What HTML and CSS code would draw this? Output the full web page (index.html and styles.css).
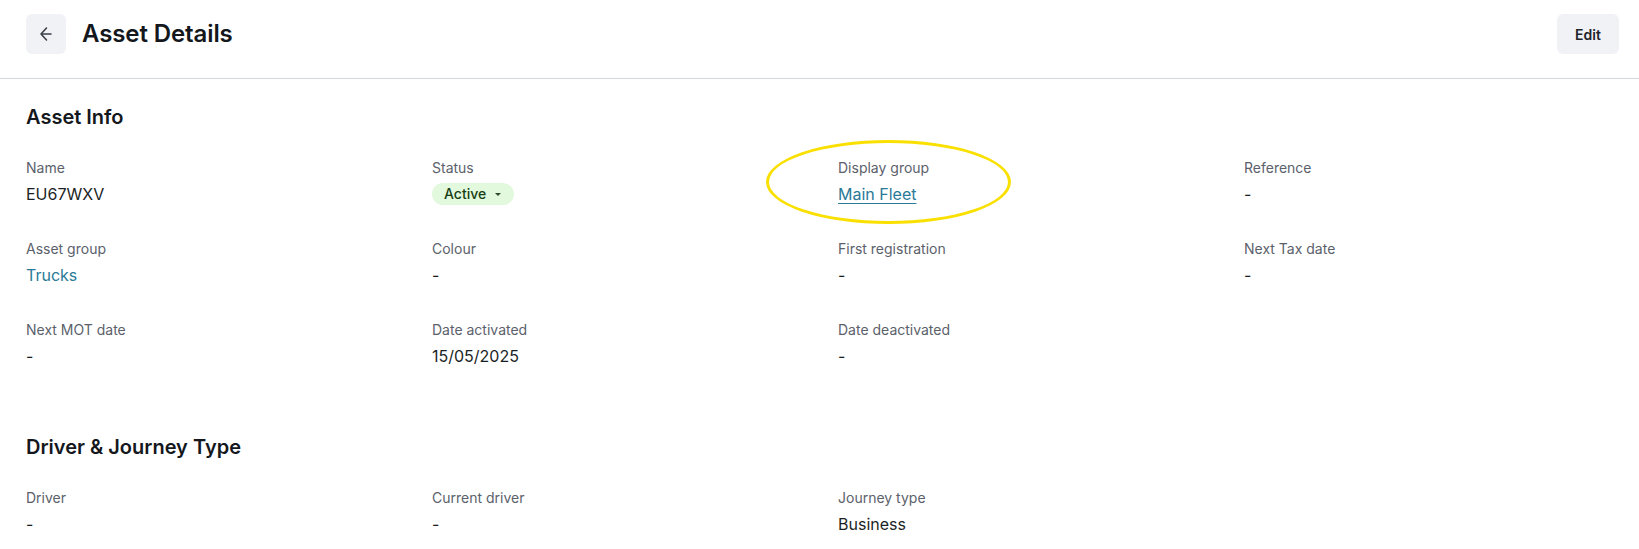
FILE: index.html
```html
<!DOCTYPE html>
<html lang="en">
<head>
<meta charset="utf-8">
<title>Asset Details</title>
<link rel="stylesheet" href="styles.css">
</head>
<body>
<div class="page">
  <header class="topbar">
    <button class="back-btn" aria-label="Back">
      <svg width="18" height="18" viewBox="0 0 18 18" fill="none" stroke="#3b4049" stroke-width="1.6" stroke-linecap="round" stroke-linejoin="round"><path d="M14 9H4M9.5 3L4 9l5.5 6"/></svg>
    </button>
    <h1 class="title">Asset Details</h1>
    <button class="edit-btn">Edit</button>
  </header>

  <main class="content">
    <section class="section">
      <h2 class="section-title">Asset Info</h2>
      <div class="fields">
        <div class="field"><div class="label">Name</div><div class="value">EU67WXV</div></div>
        <div class="field"><div class="label">Status</div><div class="value"><span class="pill">Active <span class="caret"></span></span></div></div>
        <div class="field"><div class="label">Display group</div><div class="value"><a class="link underline" href="#">Main Fleet</a></div></div>
        <div class="field"><div class="label">Reference</div><div class="value">-</div></div>

        <div class="field"><div class="label">Asset group</div><div class="value"><a class="link" href="#">Trucks</a></div></div>
        <div class="field"><div class="label">Colour</div><div class="value">-</div></div>
        <div class="field"><div class="label">First registration</div><div class="value">-</div></div>
        <div class="field"><div class="label">Next Tax date</div><div class="value">-</div></div>

        <div class="field"><div class="label">Next MOT date</div><div class="value">-</div></div>
        <div class="field"><div class="label">Date activated</div><div class="value">15/05/2025</div></div>
        <div class="field"><div class="label">Date deactivated</div><div class="value">-</div></div>
      </div>
    </section>

    <section class="section">
      <h2 class="section-title">Driver &amp; Journey Type</h2>
      <div class="fields">
        <div class="field"><div class="label">Driver</div><div class="value">-</div></div>
        <div class="field"><div class="label">Current driver</div><div class="value">-</div></div>
        <div class="field"><div class="label">Journey type</div><div class="value">Business</div></div>
      </div>
    </section>
  </main>

  <div class="highlight"></div>
</div>
</body>
</html>
```

FILE: styles.css
```css
* { box-sizing: border-box; }

html, body {
  margin: 0;
  padding: 0;
  background: #ffffff;
}

body {
  font-family: Inter, "Noto Sans", "Liberation Sans", sans-serif;
  color: #1b1f25;
  overflow: hidden;
}

.page {
  position: relative;
  min-height: 549px;
}

.topbar {
  display: flex;
  align-items: center;
  padding: 14px 20px 24px 26px;
  border-bottom: 1px solid #d3d7de;
}

.back-btn {
  width: 40px;
  height: 40px;
  border: none;
  border-radius: 6px;
  background: #f0f2f6;
  display: flex;
  align-items: center;
  justify-content: center;
  padding: 0;
  cursor: pointer;
}

.title {
  margin: 0 0 0 16px;
  font-size: 24px;
  line-height: 32px;
  font-weight: 600;
  color: #14171c;
  letter-spacing: -0.1px;
}

.edit-btn {
  margin-left: auto;
  height: 40px;
  width: 62px;
  border: none;
  border-radius: 6px;
  background: #f0f2f6;
  font-family: inherit;
  font-size: 14px;
  font-weight: 600;
  color: #1f242b;
  padding: 0;
  cursor: pointer;
}

.content {
  padding: 24px 20px 0 26px;
}

.section + .section {
  margin-top: 65px;
}

.section-title {
  margin: 0 0 27px 0;
  font-size: 20px;
  line-height: 28px;
  font-weight: 600;
  color: #14171c;
}

.fields {
  display: grid;
  grid-template-columns: repeat(4, 1fr);
  column-gap: 31px;
  row-gap: 33px;
}

.label {
  font-size: 14px;
  line-height: 20px;
  color: #5b616b;
}

.value {
  margin-top: 4px;
  font-size: 16px;
  line-height: 24px;
  height: 24px;
  color: #1b1f25;
  display: flex;
  align-items: center;
}

.link {
  color: #2a7a98;
  text-decoration: none;
}

.link.underline {
  text-decoration: underline;
  text-underline-offset: 3px;
  text-decoration-thickness: 1px;
}

.pill {
  display: inline-flex;
  align-items: center;
  height: 22px;
  padding: 0 13px 0 12px;
  border-radius: 11px;
  background: #e2f9de;
  color: #173d12;
  font-size: 14px;
  font-weight: 500;
}

.caret {
  display: inline-block;
  width: 0;
  height: 0;
  margin-left: 9px;
  border-left: 3px solid transparent;
  border-right: 3px solid transparent;
  border-top: 3px solid #2c4a28;
}

.highlight {
  position: absolute;
  left: 766px;
  top: 140px;
  width: 245px;
  height: 84px;
  border: 3px solid #f9e000;
  border-radius: 50%;
  pointer-events: none;
}
```
